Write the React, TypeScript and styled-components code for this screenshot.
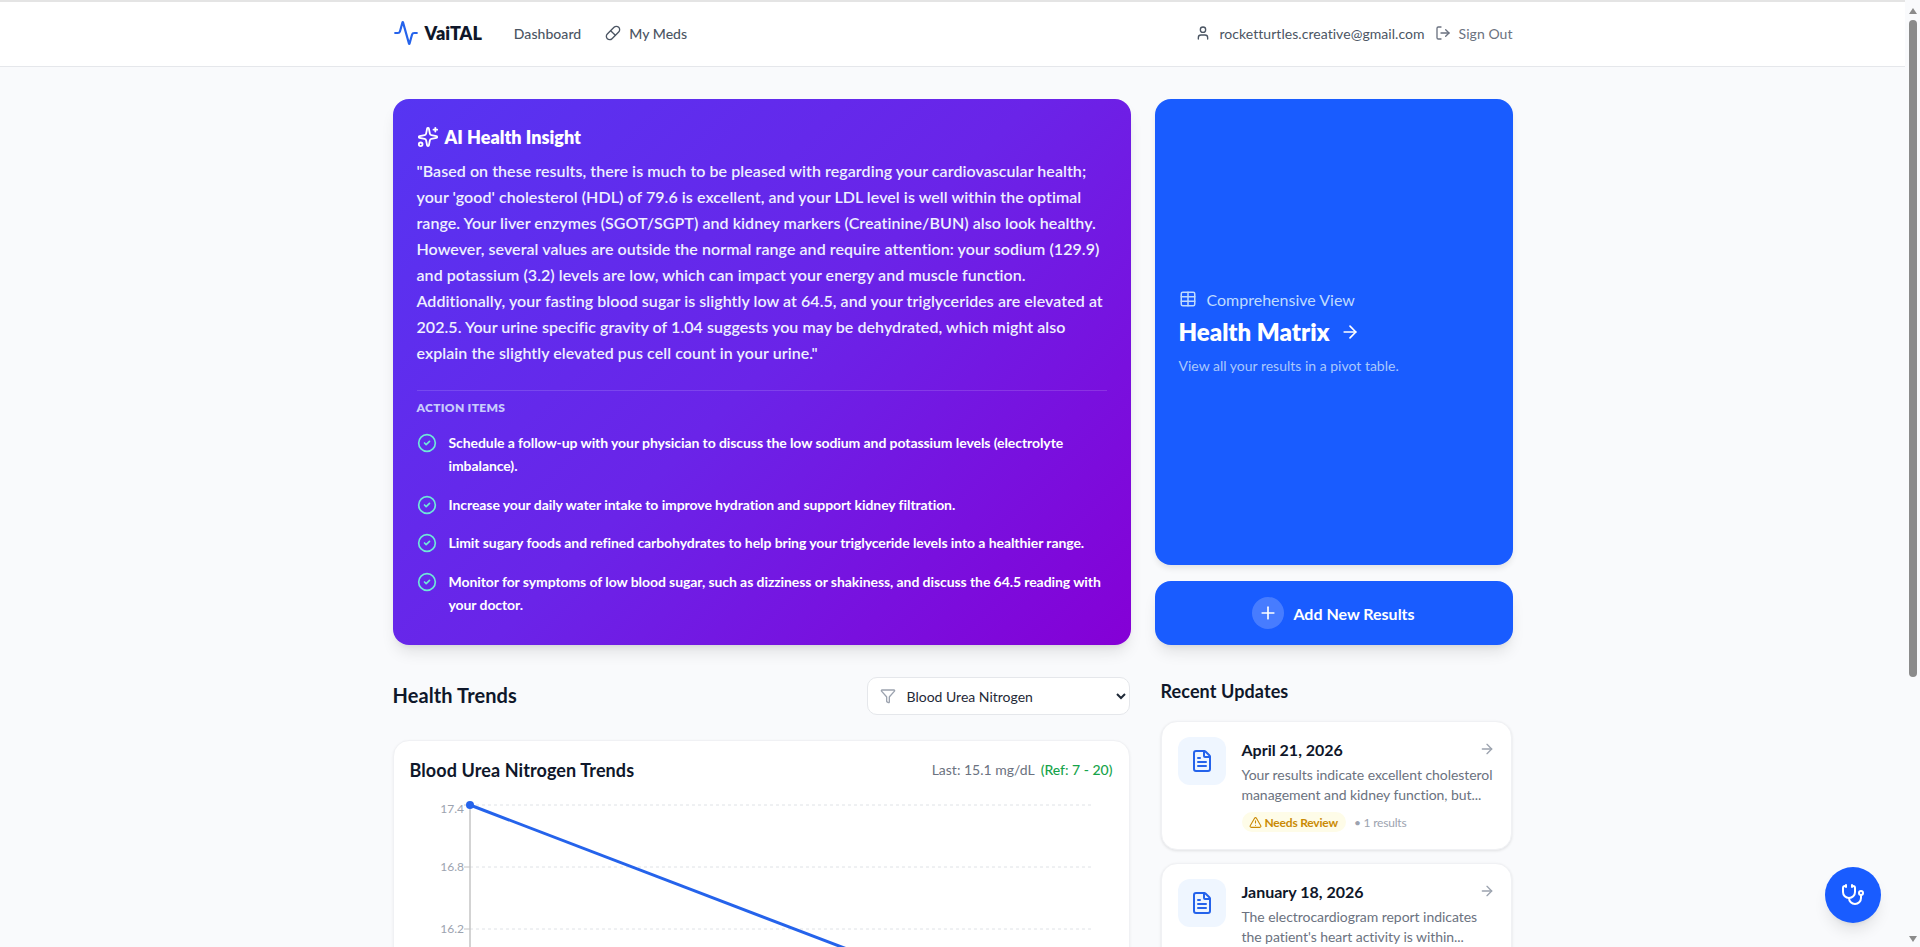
import React from 'react';
import styled, { createGlobalStyle } from 'styled-components';
import {
  Activity, AlertTriangle, ArrowRight, CircleCheck, FileText, Filter, LogOut, Pill, Plus, Sparkles, Stethoscope, Table, User,
} from 'lucide-react';

const GlobalStyle = createGlobalStyle`
  * { box-sizing: border-box; }
  body {
    margin: 0;
    overflow: hidden;
    background: #f9fafc;
    color: #0f172a;
    font-family: "Lato", "Open Sans", sans-serif;
  }
  ::-webkit-scrollbar { display: none; }
`;

const Shell = styled.div`
  display: flex;
  height: 100vh;
`;

const Page = styled.div`
  flex: 1;
  min-width: 0;
  overflow-y: auto;
`;

const Rail = styled.aside`
  flex: none;
  width: 15px;
  display: flex;
  flex-direction: column;
  align-items: center;
  padding-top: 8px;
`;

const RailArrow = styled.span<{ $down?: boolean }>`
  width: 0;
  height: 0;
  border-left: 4.5px solid transparent;
  border-right: 4.5px solid transparent;
  ${p => (p.$down
    ? 'border-top: 6px solid #8b8b8b; margin-top: auto; margin-bottom: 5px;'
    : 'border-bottom: 6px solid #8b8b8b;')}
`;

const RailThumb = styled.span`
  width: 8px;
  height: 657px;
  margin-top: 6px;
  border-radius: 4px;
  background: #8b8b8b;
`;

const Header = styled.header`
  height: 67px;
  background: #fff;
  border-top: 2px solid #e4e4e4;
  border-bottom: 1px solid #e5e7eb;
`;

const Bar = styled.div`
  width: 1120px;
  height: 100%;
  margin: 0 auto;
  padding-bottom: 2px;
  display: flex;
  align-items: center;
  justify-content: space-between;
`;

const Group = styled.div<{ $gap: number }>`
  display: flex;
  align-items: center;
  gap: ${p => p.$gap}px;
`;

const Brand = styled.div`
  display: flex;
  align-items: center;
  gap: 6px;
  margin-right: 8px;
  font-size: 18px;
  font-weight: 800;
  color: #0f172a;
  svg { color: #2563eb; }
`;

const NavLink = styled.a<{ $muted?: boolean; $strong?: boolean }>`
  display: flex;
  align-items: center;
  gap: 8px;
  font-size: 14px;
  font-weight: ${p => (p.$strong ? 500 : 400)};
  letter-spacing: 0.05px;
  color: ${p => (p.$muted ? '#6b7280' : '#4b5563')};
`;

const Main = styled.main`
  width: 1120px;
  margin: 0 auto;
  padding: 32px 0 30px;
`;

const TopGrid = styled.div`
  display: grid;
  grid-template-columns: 738px 358px;
  gap: 24px;
`;

const InsightCard = styled.section`
  height: 546px;
  padding: 24px;
  border-radius: 16px;
  color: #fff;
  background: linear-gradient(135deg, #5635f2 0%, #6a24e8 50%, #8500d6 100%);
  box-shadow: 0 10px 15px -3px rgba(0, 0, 0, 0.1), 0 4px 6px -4px rgba(0, 0, 0, 0.1);
`;

const InsightTitle = styled.h2`
  display: flex;
  align-items: center;
  gap: 6px;
  height: 28px;
  margin: 0 0 7px;
  font-size: 18px;
  font-weight: 800;
`;

const InsightText = styled.p`
  margin: 0;
  font-size: 16px;
  font-weight: 600;
  line-height: 26px;
  letter-spacing: 0.06px;
  color: #eef0ff;
`;

const ActionBlock = styled.div`
  margin-top: 24px;
  padding-top: 9px;
  border-top: 1px solid rgba(255, 255, 255, 0.14);
`;

const ActionHeading = styled.h3`
  margin: 0 0 15px;
  font-size: 12px;
  line-height: 16px;
  font-weight: 800;
  text-transform: uppercase;
  letter-spacing: 0.3px;
  color: #c7cbfc;
`;

const ActionList = styled.ul`
  list-style: none;
  margin: 0;
  padding: 0;
  display: flex;
  flex-direction: column;
  gap: 15.5px;
`;

const ActionItem = styled.li`
  display: flex;
  gap: 12px;
  font-size: 14px;
  font-weight: 700;
  line-height: 23px;
  letter-spacing: -0.08px;
  svg { flex: none; color: #6ee7d8; margin-top: 2px; }
`;

const SideColumn = styled.div`
  display: flex;
  flex-direction: column;
  gap: 16px;
`;

const MatrixCard = styled.a`
  flex: 1;
  display: flex;
  flex-direction: column;
  justify-content: center;
  padding: 27px 24px 26px;
  border-radius: 16px;
  background: #195cff;
  color: #fff;
  box-shadow: 0 4px 6px -1px rgba(0, 0, 0, 0.1);
`;

const MatrixLabel = styled.div`
  display: flex;
  align-items: center;
  gap: 10px;
  font-size: 16px;
  color: #bfdbfe;
`;

const MatrixTitle = styled.div`
  display: flex;
  align-items: center;
  gap: 10px;
  margin-top: 7px;
  font-size: 24px;
  line-height: 32px;
  font-weight: 800;
`;

const MatrixNote = styled.div`
  margin-top: 8px;
  font-size: 14px;
  line-height: 20px;
  color: #a9c8fd;
`;

const AddButton = styled.button`
  height: 64px;
  display: flex;
  align-items: center;
  justify-content: center;
  gap: 9px;
  padding-bottom: 1px;
  border: 0;
  border-radius: 16px;
  background: #195cff;
  color: #fff;
  font: 700 16px "Lato", sans-serif;
  box-shadow: 0 10px 15px -3px rgba(0, 0, 0, 0.1), 0 4px 6px -4px rgba(0, 0, 0, 0.1);
`;

const PlusCircle = styled.span`
  width: 32px;
  height: 32px;
  display: flex;
  align-items: center;
  justify-content: center;
  border-radius: 50%;
  background: rgba(255, 255, 255, 0.2);
`;

const LowerGrid = styled.div`
  display: grid;
  grid-template-columns: 737px 351px;
  gap: 32px 31px;
  margin-top: 32px;
`;

const TrendsHead = styled.div`
  height: 38px;
  margin-bottom: 25px;
  display: flex;
  align-items: center;
  justify-content: space-between;
  h2 { margin-bottom: 2px; }
`;

const SectionTitle = styled.h2<{ $size: number }>`
  margin: 0;
  font-size: ${p => p.$size}px;
  line-height: 28px;
  font-weight: 700;
  letter-spacing: 0.1px;
  color: #0f172a;
`;

const SelectWrap = styled.div`
  position: relative;
  width: 263px;
  height: 38px;
  svg { position: absolute; left: 13px; top: 11px; color: #9ca3af; }
`;

const MetricSelect = styled.select`
  width: 100%;
  height: 100%;
  padding-left: 35px;
  border: 1px solid #e5e7eb;
  border-radius: 10px;
  background: #fff;
  color: #1f2937;
  font: 400 14px "Lato", sans-serif;
`;

const ChartCard = styled.div`
  padding: 16px;
  background: #fff;
  border: 1px solid #f0f1f4;
  border-radius: 16px;
  box-shadow: 0 1px 3px rgba(0, 0, 0, 0.06);
`;

const ChartHead = styled.div`
  display: flex;
  align-items: center;
  justify-content: space-between;
  height: 25px;
  margin-bottom: 5px;
`;

const ChartNote = styled.div`
  font-size: 14px;
  color: #6b7280;
`;

const RefRange = styled.span`
  margin-left: 6px;
  color: #16a34a;
  font-weight: 500;
`;

const ChartSvg = styled.svg`
  display: block;
  width: 703px;
  height: 340px;
  font-family: "Lato", sans-serif;
  font-size: 12px;
`;

const UpdateList = styled.div`
  margin-top: 16px;
  display: flex;
  flex-direction: column;
  gap: 13px;
`;

const UpdateCard = styled.article`
  height: 129px;
  padding: 15px 16px;
  display: flex;
  gap: 16px;
  background: #fff;
  border: 1px solid #f0f1f4;
  border-radius: 16px;
  box-shadow: 0 1px 3px rgba(0, 0, 0, 0.1);
`;

const FileBox = styled.div`
  flex: none;
  width: 48px;
  height: 48px;
  display: flex;
  align-items: center;
  justify-content: center;
  border-radius: 12px;
  background: #eff6ff;
  color: #2563eb;
`;

const UpdateBody = styled.div`
  flex: 1;
  min-width: 0;
`;

const UpdateTop = styled.div`
  display: flex;
  align-items: center;
  justify-content: space-between;
  height: 24px;
  font-size: 16px;
  font-weight: 700;
  color: #0f172a;
  svg { color: #9ca3af; }
`;

const UpdateText = styled.p`
  margin: 4px 0 0;
  font-size: 14px;
  line-height: 20px;
  letter-spacing: -0.05px;
  white-space: pre-line;
  color: #6b7280;
`;

const UpdateMeta = styled.div`
  margin-top: 7px;
  display: flex;
  align-items: center;
  gap: 8px;
  font-size: 12px;
  letter-spacing: -0.2px;
  color: #9ca3af;
`;

const ReviewBadge = styled.span`
  display: flex;
  align-items: center;
  gap: 3px;
  height: 20px;
  padding: 0 8px 0 7px;
  border-radius: 10px;
  background: #fefce8;
  color: #ca8a04;
  font-weight: 700;
`;

const Fab = styled.button`
  position: fixed;
  right: 39px;
  bottom: 24px;
  width: 56px;
  height: 56px;
  display: flex;
  align-items: center;
  justify-content: center;
  border: 0;
  border-radius: 50%;
  background: #195cff;
  color: #fff;
  box-shadow: 0 10px 15px -3px rgba(0, 0, 0, 0.1), 0 4px 6px -4px rgba(0, 0, 0, 0.1);
`;

const actions = [
  'Schedule a follow-up with your physician to discuss the low sodium and potassium levels (electrolyte imbalance).',
  'Increase your daily water intake to improve hydration and support kidney filtration.',
  'Limit sugary foods and refined carbohydrates to help bring your triglyceride levels into a healthier range.',
  'Monitor for symptoms of low blood sugar, such as dizziness or shakiness, and discuss the 64.5 reading with your doctor.',
];

const updates = [
  { date: 'April 21, 2026', text: 'Your results indicate excellent cholesterol\nmanagement and kidney function, but...', review: true },
  { date: 'January 18, 2026', text: "The electrocardiogram report indicates\nthe patient's heart activity is within...", review: false },
];

const ticks = [
  { label: '17.4', y: 18, dy: 8 },
  { label: '16.8', y: 80, dy: 4 },
  { label: '16.2', y: 142, dy: 4 },
  { label: '15.6', y: 204, dy: 4 },
  { label: '15', y: 266, dy: 4 },
];

function TrendChart() {
  return (
    <ChartSvg viewBox="0 0 703 340">
      {ticks.map(t => (
        <g key={t.label}>
          <line x1={60} x2={683} y1={t.y} y2={t.y} stroke="#dfe2e6" strokeDasharray="3 3" />
          <line x1={54} x2={60} y1={t.y} y2={t.y} stroke="#c4c4c4" />
          <text x={54} y={t.y + t.dy} textAnchor="end" fill="#9ca3af">{t.label}</text>
        </g>
      ))}
      <line x1={60} x2={60} y1={18} y2={300} stroke="#c4c4c4" strokeWidth={1.5} />
      <line x1={60} x2={683} y1={300} y2={300} stroke="#c4c4c4" />
      <line x1={60} y1={18} x2={683} y2={256} stroke="#2563eb" strokeWidth={3} />
      <circle cx={60} cy={18} r={4} fill="#2563eb" />
      <circle cx={683} cy={256} r={4} fill="#2563eb" />
    </ChartSvg>
  );
}

export default function App() {
  return (
    <>
      <GlobalStyle />
      <Shell>
        <Page>
          <Header>
            <Bar>
              <Group $gap={24}>
                <Brand><Activity size={26} strokeWidth={2} />VaiTAL</Brand>
                <NavLink $strong>Dashboard</NavLink>
                <NavLink $strong><Pill size={16} />My Meds</NavLink>
              </Group>
              <Group $gap={10}>
                <NavLink><User size={16} />rocketturtles.creative@gmail.com</NavLink>
                <NavLink $muted><LogOut size={16} />Sign Out</NavLink>
              </Group>
            </Bar>
          </Header>
          <Main>
            <TopGrid>
              <InsightCard>
                <InsightTitle><Sparkles size={22} />AI Health Insight</InsightTitle>
                <InsightText>
                  "Based on these results, there is much to be pleased with regarding your cardiovascular health; your 'good' cholesterol (HDL) of 79.6 is excellent, and your LDL level is well within the optimal range. Your liver enzymes (SGOT/SGPT) and kidney markers (Creatinine/BUN) also look healthy. However, several values are outside the normal range and require attention: your sodium (129.9) and potassium (3.2) levels are low, which can impact your energy and muscle function. Additionally, your fasting blood sugar is slightly low at 64.5, and your triglycerides are elevated at 202.5. Your urine specific gravity of 1.04 suggests you may be dehydrated, which might also explain the slightly elevated pus cell count in your urine."
                </InsightText>
                <ActionBlock>
                  <ActionHeading>Action Items</ActionHeading>
                  <ActionList>
                    {actions.map(a => (
                      <ActionItem key={a}><CircleCheck size={20} /><span>{a}</span></ActionItem>
                    ))}
                  </ActionList>
                </ActionBlock>
              </InsightCard>
              <SideColumn>
                <MatrixCard>
                  <MatrixLabel><Table size={18} />Comprehensive View</MatrixLabel>
                  <MatrixTitle>Health Matrix<ArrowRight size={20} /></MatrixTitle>
                  <MatrixNote>View all your results in a pivot table.</MatrixNote>
                </MatrixCard>
                <AddButton><PlusCircle><Plus size={20} /></PlusCircle>Add New Results</AddButton>
              </SideColumn>
            </TopGrid>
            <LowerGrid>
              <div>
                <TrendsHead>
                  <SectionTitle $size={20}>Health Trends</SectionTitle>
                  <SelectWrap>
                    <Filter size={16} />
                    <MetricSelect defaultValue="bun">
                      <option value="bun">Blood Urea Nitrogen</option>
                    </MetricSelect>
                  </SelectWrap>
                </TrendsHead>
                <ChartCard>
                  <ChartHead>
                    <SectionTitle $size={18}>Blood Urea Nitrogen Trends</SectionTitle>
                    <ChartNote>Last: 15.1 mg/dL<RefRange>(Ref: 7 - 20)</RefRange></ChartNote>
                  </ChartHead>
                  <TrendChart />
                </ChartCard>
              </div>
              <div>
                <SectionTitle $size={18}>Recent Updates</SectionTitle>
                <UpdateList>
                  {updates.map(u => (
                    <UpdateCard key={u.date}>
                      <FileBox><FileText size={24} /></FileBox>
                      <UpdateBody>
                        <UpdateTop>{u.date}<ArrowRight size={16} /></UpdateTop>
                        <UpdateText>{u.text}</UpdateText>
                        {u.review && (
                          <UpdateMeta>
                            <ReviewBadge><AlertTriangle size={13} />Needs Review</ReviewBadge>
                            • 1 results
                          </UpdateMeta>
                        )}
                      </UpdateBody>
                    </UpdateCard>
                  ))}
                </UpdateList>
              </div>
            </LowerGrid>
          </Main>
        </Page>
        <Rail>
          <RailArrow />
          <RailThumb />
          <RailArrow $down />
        </Rail>
      </Shell>
      <Fab><Stethoscope size={24} /></Fab>
    </>
  );
}
